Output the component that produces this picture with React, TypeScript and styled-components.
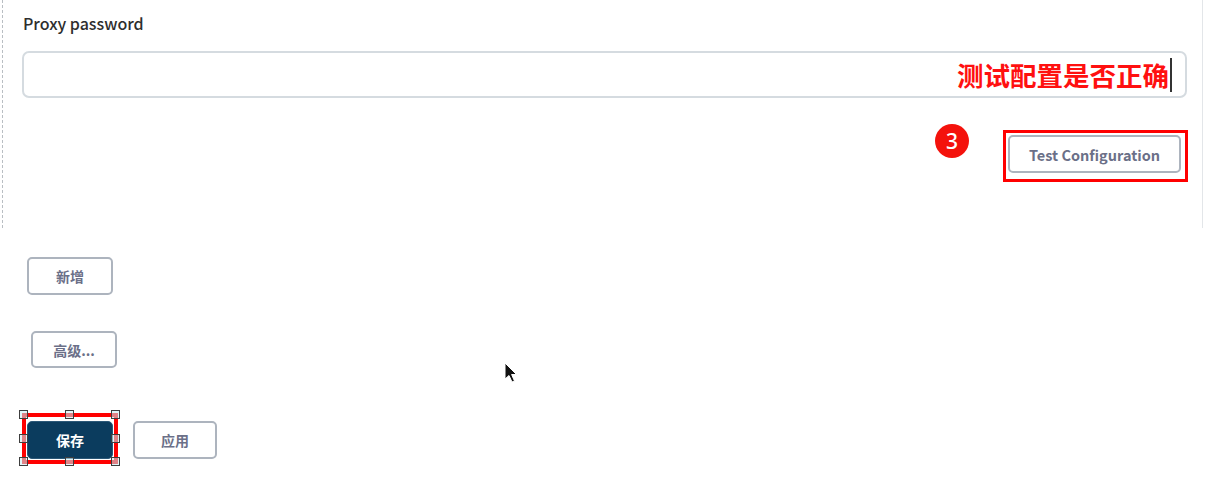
import React from "react";
import styled, { createGlobalStyle } from "styled-components";

const GlobalStyle = createGlobalStyle`
  html, body {
    margin: 0;
    padding: 0;
    background: #ffffff;
  }
  body {
    font-family: "Noto Sans CJK SC", "Noto Sans", sans-serif;
    color: #333333;
  }
`;

const Page = styled.div`
  position: relative;
  width: 1205px;
  height: 490px;
  overflow: hidden;
`;

const Section = styled.section`
  margin-left: 2px;
  width: 1201px;
  height: 228px;
  box-sizing: border-box;
  border-left: 1px dashed #b9bec3;
  border-right: 1px solid #e3e6e9;
  padding: 11px 15px 0 19px;
`;

const Label = styled.div`
  font-size: 16px;
  line-height: 24px;
  font-weight: 500;
  color: #2e2e2e;
  margin-left: 1px;
`;

const Field = styled.div`
  margin-top: 16px;
  height: 47px;
  box-sizing: border-box;
  border: 2px solid #d5dbe0;
  border-radius: 7px;
  display: flex;
  align-items: center;
  justify-content: flex-end;
  padding-right: 13px;
`;

const Annotation = styled.span`
  color: #ff1010;
  font-size: 26.5px;
  font-weight: 700;
  line-height: 30px;
`;

const Caret = styled.span`
  width: 2px;
  height: 34px;
  margin-left: 1px;
  background: #333;
`;

const TestRow = styled.div`
  margin-top: 32px;
  margin-right: -1px;
  display: flex;
  justify-content: flex-end;
  align-items: flex-start;
`;

const Badge = styled.div`
  width: 34px;
  height: 34px;
  margin-top: -6px;
  margin-right: 34px;
  border-radius: 50%;
  background: #f4120c;
  color: #fff;
  font-size: 21px;
  font-weight: 500;
  display: flex;
  align-items: center;
  justify-content: center;
  font-family: "Noto Sans", sans-serif;
`;

const Highlight = styled.div<{ $pad: string; $width: number }>`
  position: relative;
  border: ${(p) => p.$width}px solid #ff0000;
  padding: ${(p) => p.$pad};
  display: inline-flex;
`;

const Button = styled.button<{ $w: number; $primary?: boolean }>`
  width: ${(p) => p.$w}px;
  height: 38px;
  box-sizing: border-box;
  border-radius: 5px;
  font-family: "Noto Sans CJK SC", "Noto Sans", sans-serif;
  font-size: 14px;
  font-weight: 600;
  cursor: pointer;
  border: ${(p) => (p.$primary ? "1px solid #2b5878" : "2px solid #adb4be")};
  background: ${(p) => (p.$primary ? "#0b3c5e" : "#ffffff")};
  color: ${(p) => (p.$primary ? "#ffffff" : "#6b7088")};
  padding: 0;
`;

const TestButton = styled(Button)`
  font-size: 14.5px;
`;

const Actions = styled.div`
  display: flex;
  flex-direction: column;
  align-items: flex-start;
  padding-left: 27px;
`;

const AddButton = styled(Button)`
  margin-top: 29px;
`;

const AdvancedButton = styled(Button)`
  margin-top: 36px;
  margin-left: 4px;
  height: 37px;
`;

const SaveRow = styled.div`
  margin-top: 45px;
  margin-left: -5px;
  display: flex;
  align-items: flex-start;
  gap: 15px;
`;

const ApplyButton = styled(Button)`
  margin-top: 8px;
`;

const Handle = styled.span<{ $x: string; $y: string }>`
  position: absolute;
  left: ${(p) => p.$x};
  top: ${(p) => p.$y};
  width: 7px;
  height: 7px;
  margin: -5px 0 0 -5px;
  border: 1.5px solid #3e3e3e;
  background: rgba(200, 238, 245, 0.55);
`;

const Pointer = styled.svg`
  position: absolute;
  left: 504px;
  top: 362px;
`;

const handles: [string, string][] = [
  ["-2px", "-2px"],
  ["50%", "-2px"],
  ["calc(100% + 2px)", "-2px"],
  ["-2px", "50%"],
  ["calc(100% + 2px)", "50%"],
  ["-2px", "calc(100% + 2px)"],
  ["50%", "calc(100% + 2px)"],
  ["calc(100% + 2px)", "calc(100% + 2px)"],
];

export default function App() {
  return (
    <Page>
      <GlobalStyle />
      <Section>
        <Label>Proxy password</Label>
        <Field>
          <Annotation>测试配置是否正确</Annotation>
          <Caret />
        </Field>
        <TestRow>
          <Badge>3</Badge>
          <Highlight $width={3} $pad="2px 4px 6px 2px">
            <TestButton $w={173}>Test Configuration</TestButton>
          </Highlight>
        </TestRow>
      </Section>
      <Actions>
        <AddButton $w={86}>新增</AddButton>
        <AdvancedButton $w={86}>高级...</AdvancedButton>
        <SaveRow>
          <Highlight $width={4} $pad="4px 1px 1px 1px">
            <Button $w={86} $primary>
              保存
            </Button>
            {handles.map(([x, y], i) => (
              <Handle key={i} $x={x} $y={y} />
            ))}
          </Highlight>
          <ApplyButton $w={84}>应用</ApplyButton>
        </SaveRow>
      </Actions>
      <Pointer width="14" height="22" viewBox="0 0 14 22">
        <path d="M1 1 L1 17 L5 13.5 L8 20 L10.5 19 L7.6 12.5 L12.5 12.5 Z" fill="#111" stroke="#fff" strokeWidth="1" />
      </Pointer>
    </Page>
  );
}
